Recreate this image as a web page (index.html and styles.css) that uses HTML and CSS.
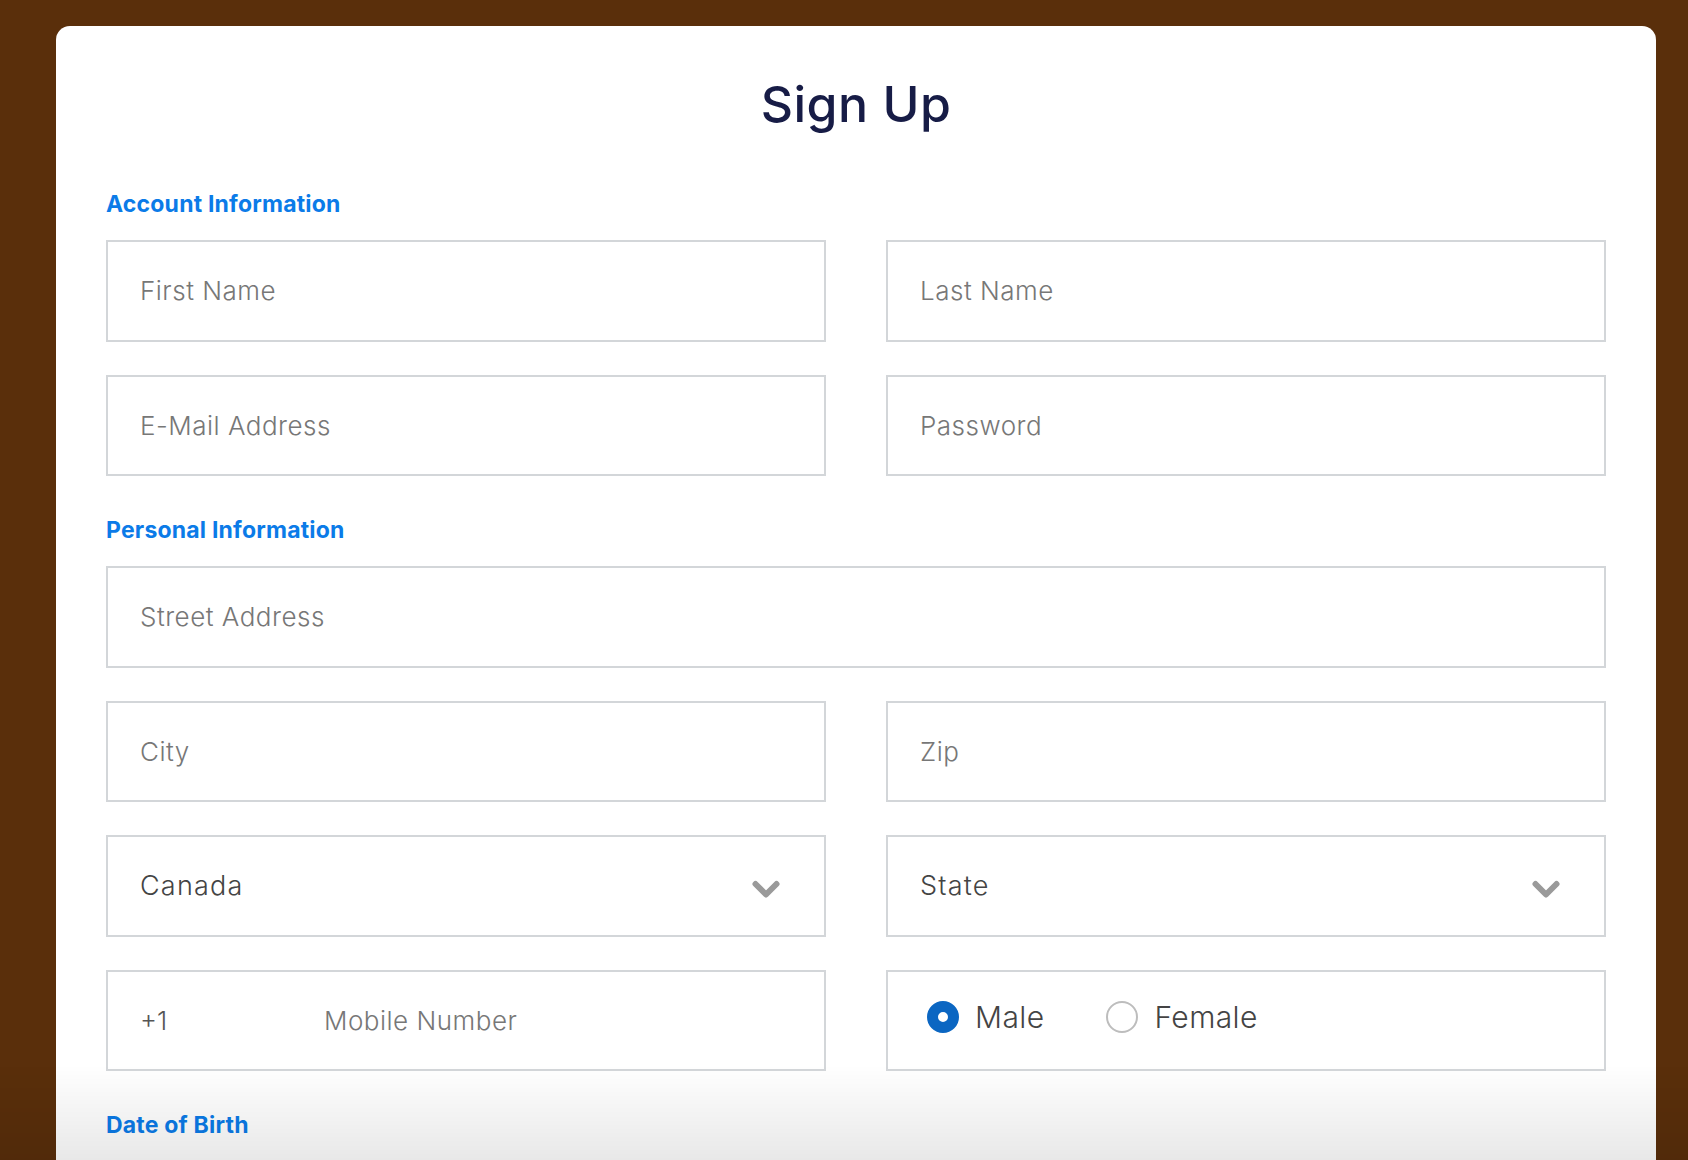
FILE: index.html
```html
<!DOCTYPE html>
<html lang="en">
<head>
    <meta charset="UTF-8">
    <meta name="viewport" content="width=device-width, initial-scale=1.0">
    <title>Sign Up</title>
    <link rel="stylesheet" href="styles.css">
</head>
<body>
    <div class="card">
        <h1>Sign Up</h1>

        <form id="signupForm">
            <h3 class="section-title">Account Information</h3>
            <div class="grid">
                <input type="text" class="field" placeholder="First Name">
                <input type="text" class="field" placeholder="Last Name">
                <input type="email" class="field" placeholder="E-Mail Address">
                <input type="password" class="field" placeholder="Password">
            </div>

            <h3 class="section-title">Personal Information</h3>
            <div class="grid">
                <input type="text" class="field full" placeholder="Street Address">
                <input type="text" class="field" placeholder="City">
                <input type="text" class="field" placeholder="Zip">

                <div class="select-wrap">
                    <select class="field select">
                        <option>Canada</option>
                        <option>United States</option>
                    </select>
                    <svg class="chevron" width="28" height="20" viewBox="0 0 28 20">
                        <path d="M3.5 4 L14 14.5 L24.5 4" fill="none" stroke="#9a9a9a" stroke-width="6" stroke-linecap="round" stroke-linejoin="round"/>
                    </svg>
                </div>
                <div class="select-wrap">
                    <select class="field select">
                        <option>State</option>
                    </select>
                    <svg class="chevron" width="28" height="20" viewBox="0 0 28 20">
                        <path d="M3.5 4 L14 14.5 L24.5 4" fill="none" stroke="#9a9a9a" stroke-width="6" stroke-linecap="round" stroke-linejoin="round"/>
                    </svg>
                </div>

                <div class="phone">
                    <span class="code">+1</span>
                    <input type="tel" placeholder="Mobile Number">
                </div>
                <div class="radios">
                    <label class="radio">
                        <input type="radio" name="gender" value="male" checked>
                        <span>Male</span>
                    </label>
                    <label class="radio">
                        <input type="radio" name="gender" value="female">
                        <span>Female</span>
                    </label>
                </div>
            </div>

            <h3 class="section-title">Date of Birth</h3>
            <div class="dob">
                <select class="field select"><option>Month</option></select>
                <select class="field select"><option>Day</option></select>
                <select class="field select"><option>Year</option></select>
            </div>
        </form>
    </div>
    <div class="fade"></div>
</body>
</html>
```

FILE: styles.css
```css
body {
    margin: 0;
    background-color: #5a2f0b;
    font-family: 'Inter', 'Open Sans', sans-serif;
    color: #444;
}
.card {
    background-color: #fff;
    margin: 26px 32px 0 56px;
    padding: 47px 50px 60px;
    border-radius: 14px 14px 0 0;
}
h1 {
    margin: 0 0 54px;
    text-align: center;
    font-size: 50px;
    line-height: 62px;
    font-weight: 500;
    color: #171c46;
    letter-spacing: 0.5px;
}
.section-title {
    margin: 0 0 21px;
    font-size: 23px;
    line-height: 30px;
    font-weight: 700;
    color: #0b7be8;
    letter-spacing: 0.2px;
}
.grid {
    display: grid;
    grid-template-columns: 1fr 1fr;
    column-gap: 60px;
    row-gap: 33px;
    margin-bottom: 39px;
}
.full {
    grid-column: 1 / -1;
}
.field, .phone, .radios {
    box-sizing: border-box;
    width: 100%;
    height: 101.5px;
    border: 2px solid #d3d6d9;
    background-color: #fff;
}
.field {
    padding: 0 32px;
    font-family: inherit;
    font-size: 26px;
    font-weight: 300;
    letter-spacing: 0.5px;
    color: #444;
    outline: none;
}
.field::placeholder, .phone input::placeholder {
    color: #777;
}
.select-wrap {
    position: relative;
}
.select {
    appearance: none;
    -webkit-appearance: none;
    border-radius: 0;
    font-size: 27px;
    letter-spacing: 1.2px;
    color: #444;
}
.chevron {
    position: absolute;
    right: 46px;
    top: 45px;
    pointer-events: none;
}
.phone {
    display: flex;
    align-items: center;
    padding-left: 32px;
}
.code {
    width: 152px;
    flex-shrink: 0;
    font-size: 26px;
    font-weight: 300;
    color: #555;
}
.phone input {
    flex: 1;
    height: 100%;
    border: none;
    outline: none;
    padding: 0 0 0 32px;
    font-family: inherit;
    font-size: 26px;
    font-weight: 300;
    letter-spacing: 0.5px;
    color: #444;
}
.radios {
    display: flex;
    align-items: center;
    gap: 62px;
    padding: 0 0 6px 39px;
}
.radio {
    display: flex;
    align-items: center;
    gap: 16px;
    font-size: 30px;
    font-weight: 300;
    letter-spacing: 0.4px;
    color: #444;
    cursor: pointer;
}
.radio input {
    appearance: none;
    -webkit-appearance: none;
    margin: 0;
    width: 32px;
    height: 32px;
    border-radius: 50%;
    border: 2px solid #bdbdbd;
    box-sizing: border-box;
}
.radio input:checked {
    border: 11px solid #0b66c2;
}
.dob {
    display: grid;
    grid-template-columns: 1fr 1fr 1fr;
    gap: 40px;
}
.fade {
    position: fixed;
    left: 0;
    right: 0;
    bottom: 0;
    height: 95px;
    background: linear-gradient(rgba(0, 0, 0, 0), rgba(0, 0, 0, 0.09));
    pointer-events: none;
}
```
